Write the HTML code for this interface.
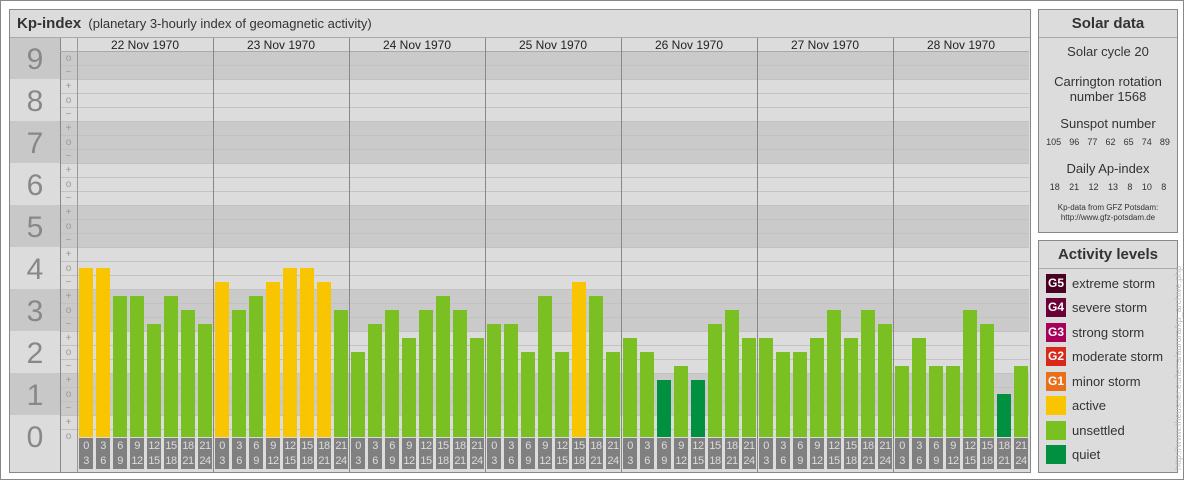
<!DOCTYPE html>
<html><head><meta charset="utf-8"><style>
*{margin:0;padding:0;box-sizing:border-box}
body{width:1184px;height:480px;position:relative;background:#fff;font-family:"Liberation Sans",Arial,sans-serif;overflow:hidden}
.a{position:absolute}
#frame{left:0;top:0;width:1184px;height:480px;border:1px solid #888}
#main{left:9px;top:9px;width:1022px;height:464px;border:1px solid #888;background:#dcdcdc}
#title{left:10px;top:10px;width:1020px;height:28px;border-bottom:1px solid #aaa;background:#dcdcdc;font-size:13px;color:#333;line-height:27px;padding-left:7px}
#title b{font-size:15px}
.dg{font-size:30px;color:#888;text-align:center;width:50px;left:10px}
.sg{font-size:10px;color:#999;text-align:center;width:17px;left:60px;line-height:14px}
.dt{font-size:12px;color:#222;text-align:center;width:136px;top:38px;line-height:14px}
.tl{width:14px;height:31px;top:438px;background:#808080;color:#ddd;font-size:11px;text-align:center;line-height:15px;padding-top:1px;letter-spacing:-0.5px}
.box{border:1px solid #888;background:#dcdcdc;left:1038px;width:140px}
.hd{font-size:15px;font-weight:bold;color:#333;text-align:center;height:28px;line-height:28px;border-bottom:1px solid #aaa}
.sd{font-size:13px;color:#333;text-align:center;width:138px;left:1039px}
.sm{font-size:9px;color:#333;left:1039px;width:138px;display:flex;justify-content:space-around;padding:0 3px}
.lg{left:1046px;width:20px;height:19px;color:#fff;font-size:12px;font-weight:bold;text-align:center;line-height:19px}
.lt{left:1072px;font-size:13px;color:#333;line-height:19px}
</style></head><body>
<div class="a" id="frame"></div>
<div class="a" id="main"></div>
<div id="g"></div>
<div class="a" id="title"><b>Kp-index</b>&nbsp;&nbsp;(planetary 3-hourly index of geomagnetic activity)</div>

<div class="a dg" style="top:43px">9</div>
<div class="a dg" style="top:85px">8</div>
<div class="a dg" style="top:127px">7</div>
<div class="a dg" style="top:169px">6</div>
<div class="a dg" style="top:211px">5</div>
<div class="a dg" style="top:253px">4</div>
<div class="a dg" style="top:295px">3</div>
<div class="a dg" style="top:337px">2</div>
<div class="a dg" style="top:379px">1</div>
<div class="a dg" style="top:421px">0</div>

<div class="a sg" style="top:52px">o</div><div class="a sg" style="top:66px">−</div>
<div class="a sg" style="top:80px">+</div><div class="a sg" style="top:94px">o</div><div class="a sg" style="top:108px">−</div>
<div class="a sg" style="top:122px">+</div><div class="a sg" style="top:136px">o</div><div class="a sg" style="top:150px">−</div>
<div class="a sg" style="top:164px">+</div><div class="a sg" style="top:178px">o</div><div class="a sg" style="top:192px">−</div>
<div class="a sg" style="top:206px">+</div><div class="a sg" style="top:220px">o</div><div class="a sg" style="top:234px">−</div>
<div class="a sg" style="top:248px">+</div><div class="a sg" style="top:262px">o</div><div class="a sg" style="top:276px">−</div>
<div class="a sg" style="top:290px">+</div><div class="a sg" style="top:304px">o</div><div class="a sg" style="top:318px">−</div>
<div class="a sg" style="top:332px">+</div><div class="a sg" style="top:346px">o</div><div class="a sg" style="top:360px">−</div>
<div class="a sg" style="top:374px">+</div><div class="a sg" style="top:388px">o</div><div class="a sg" style="top:402px">−</div>
<div class="a sg" style="top:416px">+</div><div class="a sg" style="top:430px">o</div>

<div class="a dt" style="left:77px">22 Nov 1970</div>
<div class="a dt" style="left:213px">23 Nov 1970</div>
<div class="a dt" style="left:349px">24 Nov 1970</div>
<div class="a dt" style="left:485px">25 Nov 1970</div>
<div class="a dt" style="left:621px">26 Nov 1970</div>
<div class="a dt" style="left:757px">27 Nov 1970</div>
<div class="a dt" style="left:893px">28 Nov 1970</div>

<div id="tls">
<div class="a tl" style="left:79px">0<br>3</div><div class="a tl" style="left:96px">3<br>6</div><div class="a tl" style="left:113px">6<br>9</div><div class="a tl" style="left:130px">9<br>12</div><div class="a tl" style="left:147px">12<br>15</div><div class="a tl" style="left:164px">15<br>18</div><div class="a tl" style="left:181px">18<br>21</div><div class="a tl" style="left:198px">21<br>24</div>
<div class="a tl" style="left:215px">0<br>3</div><div class="a tl" style="left:232px">3<br>6</div><div class="a tl" style="left:249px">6<br>9</div><div class="a tl" style="left:266px">9<br>12</div><div class="a tl" style="left:283px">12<br>15</div><div class="a tl" style="left:300px">15<br>18</div><div class="a tl" style="left:317px">18<br>21</div><div class="a tl" style="left:334px">21<br>24</div>
<div class="a tl" style="left:351px">0<br>3</div><div class="a tl" style="left:368px">3<br>6</div><div class="a tl" style="left:385px">6<br>9</div><div class="a tl" style="left:402px">9<br>12</div><div class="a tl" style="left:419px">12<br>15</div><div class="a tl" style="left:436px">15<br>18</div><div class="a tl" style="left:453px">18<br>21</div><div class="a tl" style="left:470px">21<br>24</div>
<div class="a tl" style="left:487px">0<br>3</div><div class="a tl" style="left:504px">3<br>6</div><div class="a tl" style="left:521px">6<br>9</div><div class="a tl" style="left:538px">9<br>12</div><div class="a tl" style="left:555px">12<br>15</div><div class="a tl" style="left:572px">15<br>18</div><div class="a tl" style="left:589px">18<br>21</div><div class="a tl" style="left:606px">21<br>24</div>
<div class="a tl" style="left:623px">0<br>3</div><div class="a tl" style="left:640px">3<br>6</div><div class="a tl" style="left:657px">6<br>9</div><div class="a tl" style="left:674px">9<br>12</div><div class="a tl" style="left:691px">12<br>15</div><div class="a tl" style="left:708px">15<br>18</div><div class="a tl" style="left:725px">18<br>21</div><div class="a tl" style="left:742px">21<br>24</div>
<div class="a tl" style="left:759px">0<br>3</div><div class="a tl" style="left:776px">3<br>6</div><div class="a tl" style="left:793px">6<br>9</div><div class="a tl" style="left:810px">9<br>12</div><div class="a tl" style="left:827px">12<br>15</div><div class="a tl" style="left:844px">15<br>18</div><div class="a tl" style="left:861px">18<br>21</div><div class="a tl" style="left:878px">21<br>24</div>
<div class="a tl" style="left:895px">0<br>3</div><div class="a tl" style="left:912px">3<br>6</div><div class="a tl" style="left:929px">6<br>9</div><div class="a tl" style="left:946px">9<br>12</div><div class="a tl" style="left:963px">12<br>15</div><div class="a tl" style="left:980px">15<br>18</div><div class="a tl" style="left:997px">18<br>21</div><div class="a tl" style="left:1014px">21<br>24</div>
</div>

<div class="a box" style="top:9px;height:224px"><div class="hd">Solar data</div></div>
<div class="a sd" style="top:44px">Solar cycle 20</div>
<div class="a sd" style="top:74px;line-height:15px">Carrington rotation<br>number 1568</div>
<div class="a sd" style="top:116px">Sunspot number</div>
<div class="a sm" style="top:137px"><span>105</span><span>96</span><span>77</span><span>62</span><span>65</span><span>74</span><span>89</span></div>
<div class="a sd" style="top:161px">Daily Ap-index</div>
<div class="a sm" style="top:182px;padding:0 6px"><span>18</span><span>21</span><span>12</span><span>13</span><span>8</span><span>10</span><span>8</span></div>
<div class="a sd" style="top:203px;font-size:8px;line-height:10px">Kp-data from GFZ Potsdam:<br>http://www.gfz-potsdam.de</div>

<div class="a box" style="top:240px;height:233px"><div class="hd">Activity levels</div></div>
<div class="a lg" style="top:274px;background:#4a0020">G5</div><div class="a lt" style="top:274px">extreme storm</div>
<div class="a lg" style="top:298px;background:#6a0035">G4</div><div class="a lt" style="top:298px">severe storm</div>
<div class="a lg" style="top:323px;background:#a8005a">G3</div><div class="a lt" style="top:323px">strong storm</div>
<div class="a lg" style="top:347px;background:#d8281a">G2</div><div class="a lt" style="top:347px">moderate storm</div>
<div class="a lg" style="top:372px;background:#e8701a">G1</div><div class="a lt" style="top:372px">minor storm</div>
<div class="a lg" style="top:396px;background:#f8c500"></div><div class="a lt" style="top:396px">active</div>
<div class="a lg" style="top:421px;background:#7ac022"></div><div class="a lt" style="top:421px">unsettled</div>
<div class="a lg" style="top:445px;background:#009040"></div><div class="a lt" style="top:445px">quiet</div>
<div class="a" style="left:1173px;top:470px;transform:rotate(-90deg);transform-origin:0 0;font-size:9px;color:#bbb;white-space:nowrap;width:240px">http://www.theusner.eu/terra/aurora/kp_archive.php</div>

<script>
(function(){
var g=document.getElementById('g'),h='';
function d(x,y,w,hh,c){h+='<div class="a" style="left:'+x+'px;top:'+y+'px;width:'+w+'px;height:'+hh+'px;background:'+c+'"></div>';}
for(var n=0;n<=9;n++){var ty=443-14*(3*n+2),by=Math.min(443-14*(3*n-1),470);if(n==9)ty=38;d(10,ty,50,by-ty,n%2?'#c8c8c8':'#dcdcdc');
 var t2=n==9?51:ty;d(77,t2,952,by-t2,n%2?'#cacaca':'#dcdcdc');d(60,t2,17,by-t2,n%2?'#cacaca':'#dcdcdc');}
d(10,470,50,2,'#dcdcdc');
for(var k=1;k<=27;k++){d(60,443-14*k,969,1,'#c2c2c2');}
d(60,38,1,434,'#888');d(77,38,1,434,'#999');d(60,51,969,1,'#aaa');
for(var i=1;i<7;i++)d(77+136*i,38,1,434,'#888');
var v=[[12,12,10,10,8,10,9,8],[11,9,10,11,12,12,11,9],[6,8,9,7,9,10,9,7],[8,8,6,10,6,11,10,6],[7,6,4,5,4,8,9,7],[7,6,6,7,9,7,9,8],[5,7,5,5,9,8,3,5]];
for(var a=0;a<7;a++)for(var b=0;b<8;b++){var t=v[a][b],y=436-14*t;d(79+136*a+17*b,y,14,437-y,t>=11?'#f8c500':(t<=4?'#009040':'#7ac022'));}
g.innerHTML=h;
})();
</script>
</body></html>
